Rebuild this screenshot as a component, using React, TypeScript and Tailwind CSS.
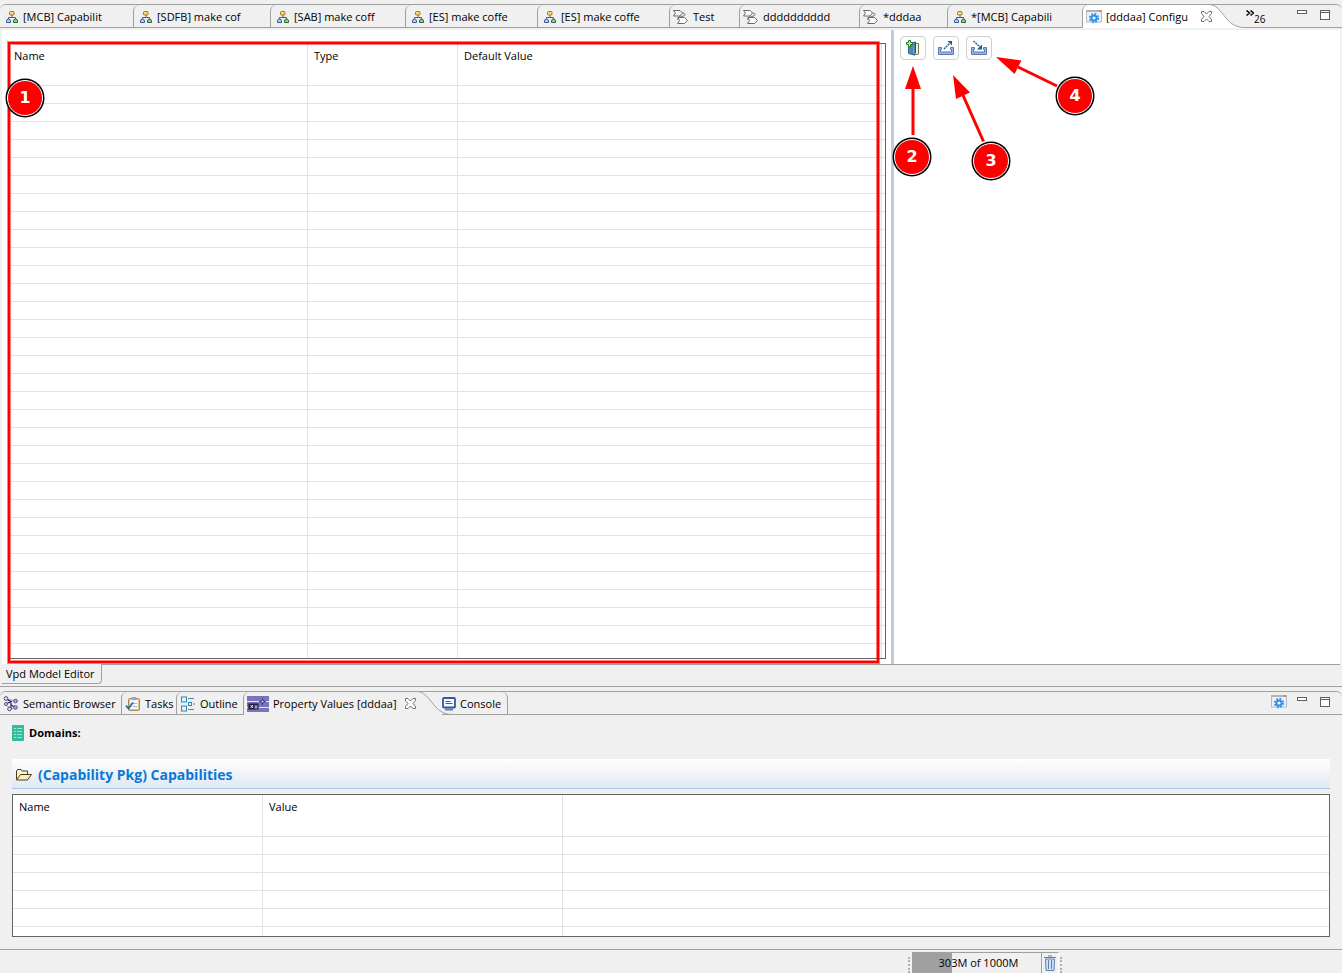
import React from "react";

type IconProps = { className?: string };

const DiagramIcon = () => (
  <svg width="12" height="12" viewBox="0 0 12 12" className="shrink-0" aria-hidden="true">
    <path d="M6 4v2.500M2.500 8V6.500h7V8" fill="none" stroke="#5b5b5b" />
    <rect x="3.500" y="0.500" width="4.500" height="3.500" rx="1" fill="#f7d98a" stroke="#a8741a" />
    <path d="M0.500 11.500v-1.500a2 2 0 0 1 4 0v1.500z" fill="#b8cdf0" stroke="#3a5a9c" />
    <path d="M7.500 11.500v-1.500a2 2 0 0 1 4 0v1.500z" fill="#8fcf8f" stroke="#23702f" />
  </svg>
);

const ChevronsIcon = () => (
  <svg width="16" height="16" viewBox="0 0 16 16" className="shrink-0" aria-hidden="true">
    <g fill="#fafafa" stroke="#6b6b6b">
      <path d="M9.500 4c3.500 0 3.500 3-1 3.500-3 0.500-4.500 1-3.500 3.500" fill="none" />
      <path d="M0.500 1.500h6.500l2.500 2.500-2.500 3H0.500l2-3z" />
      <path d="M5 8.500h6.500l3 3-3 3H4.500l2-3z" />
    </g>
  </svg>
);

const GearWindowIcon = () => (
  <svg width="16" height="14" viewBox="0 0 16 14" className="shrink-0" aria-hidden="true">
    <rect x="0.500" y="0.500" width="15" height="11.500" fill="#eaf1f8" stroke="#b4bcc6" />
    <path d="M0 1h16" stroke="#b9aeb0" strokeWidth="2" />
    <path d="M13 1h2" stroke="#e0754a" strokeWidth="1.500" />
    <circle cx="8" cy="8" r="4.200" fill="none" stroke="#3c9cf0" strokeWidth="2" strokeDasharray="1.800 1.500" />
    <circle cx="8" cy="8" r="2.600" fill="#ffffff" stroke="#2c8fee" strokeWidth="2" />
  </svg>
);

const CloseIcon = ({ className }: IconProps) => (
  <svg width="11" height="11" viewBox="0 0 11 11" className={className} aria-hidden="true">
    <path
      d="M0.500 0.500h2.500L5.500 3 8 0.500h2.500v2L8 5.500l2.500 3v2H8L5.500 8 3 10.500H0.500v-2L3 5.500l-2.500-3z"
      fill="#ffffff"
      stroke="#6e6e6e"
    />
  </svg>
);

const MinimizeIcon = () => (
  <svg width="10" height="10" viewBox="0 0 10 10" aria-hidden="true">
    <rect x="0.500" y="0.500" width="9" height="3" fill="#fff" stroke="#5f5f5f" />
  </svg>
);

const MaximizeIcon = () => (
  <svg width="10" height="10" viewBox="0 0 10 10" aria-hidden="true">
    <rect x="0.500" y="0.500" width="9" height="9" fill="#fff" stroke="#5f5f5f" />
    <path d="M0 2.500h10" stroke="#5f5f5f" />
  </svg>
);

const AddBookIcon = () => (
  <svg width="16" height="16" viewBox="0 0 16 16" aria-hidden="true">
    <path d="M9 3.500h4.500v10.500l-5 1z" fill="#f5f0d8" stroke="#7a7458" />
    <path d="M3.500 5l1-1.500 6-1.500v10l-1 3-6-1.500z" fill="#4a8ab0" stroke="#3a6c8a" />
    <path d="M10.500 2v10.500" stroke="#27506c" />
    <path d="M8.500 6.500v7" stroke="#6aa6c8" />
    <path d="M3.500 0.500h2v2h2v2h-2v2h-2v-2h-2v-2h2z" fill="#d9f0a0" stroke="#1f7a2c" />
  </svg>
);

const Tray = () => (
  <path
    d="M0.500 7.500h3v2h-1v2.500h11v-2.500h-1v-2h3v7h-15z"
    fill="#9db4dc"
    stroke="#5a78b4"
  />
);

const ExportIcon = () => (
  <svg width="16" height="16" viewBox="0 0 16 16" aria-hidden="true">
    <Tray />
    <path d="M6 9l6-6" stroke="#2b5a86" strokeDasharray="2 0.700" strokeWidth="1.400" />
    <path d="M9.500 1H14v4.500z" fill="#1d5c8c" />
  </svg>
);

const ImportIcon = () => (
  <svg width="16" height="16" viewBox="0 0 16 16" aria-hidden="true">
    <Tray />
    <path d="M2.500 1l6.500 6" stroke="#2b5a86" strokeDasharray="2 0.700" strokeWidth="1.400" />
    <path d="M11 4.500v5H6z" fill="#1d5c8c" />
  </svg>
);

const SemanticIcon = () => (
  <svg width="16" height="16" viewBox="0 0 16 16" className="shrink-0" aria-hidden="true">
    <path d="M3 3l10 2M3 9l5 4 5-2" fill="none" stroke="#9a94c0" />
    <path d="M3 3l5 2.500-4 2M8 12V6.500M8 9l4 2" fill="none" stroke="#2c2860" strokeWidth="1.300" />
    <circle cx="3" cy="2.500" r="1.800" fill="#eceafa" stroke="#4a4580" />
    <circle cx="3" cy="8" r="1.500" fill="#eceafa" stroke="#4a4580" />
    <circle cx="12.500" cy="5" r="1.800" fill="#b6b0dc" stroke="#4a4580" />
    <circle cx="6.500" cy="13" r="1.800" fill="#eceafa" stroke="#4a4580" />
    <circle cx="12.500" cy="11.500" r="1.800" fill="#b6b0dc" stroke="#4a4580" />
  </svg>
);

const TasksIcon = () => (
  <svg width="16" height="16" viewBox="0 0 16 16" className="shrink-0" aria-hidden="true">
    <rect x="3.500" y="2.500" width="11" height="12" rx="1" fill="#dcc193" stroke="#b08c55" />
    <rect x="5" y="4" width="8" height="9" fill="#f4f6fa" />
    <rect x="6.500" y="1" width="5" height="3" rx="1" fill="#9aa4b4" />
    <path d="M8 7.500h4M8 10.500h4" stroke="#a8b4cc" />
    <path d="M1 9.500l2.500 3L8 6.500" fill="none" stroke="#1e6fb4" strokeWidth="1.800" />
  </svg>
);

const OutlineIcon = () => (
  <svg width="14" height="16" viewBox="0 0 14 16" className="shrink-0" aria-hidden="true">
    <rect x="0.500" y="1" width="5" height="5" fill="#e6f4fc" stroke="#2b86bd" />
    <rect x="0.500" y="10" width="5" height="5" fill="#e6f4fc" stroke="#2b86bd" />
    <rect x="7.500" y="6.500" width="3" height="3" fill="#e6f4fc" stroke="#2b86bd" />
    <path d="M7 2.500h6M12 8h2M7 13.500h6" stroke="#5a88a8" />
  </svg>
);

const PropertyIcon = () => (
  <svg width="22" height="16" viewBox="0 0 22 16" className="shrink-0" aria-hidden="true">
    <rect width="22" height="16" fill="#7a74bd" />
    <path d="M0 5.500h22M0 11.500h22" stroke="#e6e4f4" />
    <rect x="1.500" y="7.500" width="10" height="6" rx="1" fill="#1f1c40" stroke="#4a4680" />
    <path d="M3.500 9l2.500 3M6 9l-2.500 3M7.500 10h3M7.500 11.800h3" stroke="#fff" strokeWidth="0.900" />
    <path d="M15.500 2l1 2.500 3 1-3 1-1 3-1-3-3-1 3-1z" fill="#3a3468" />
    <circle cx="15.500" cy="5.500" r="1" fill="#dedaf4" />
  </svg>
);

const ConsoleIcon = () => (
  <svg width="14" height="14" viewBox="0 0 14 14" className="shrink-0" aria-hidden="true">
    <rect x="1" y="1" width="12" height="9.500" rx="1" fill="#f4f8fe" stroke="#2c5ba0" strokeWidth="1.800" />
    <path d="M3.500 4.500h5M3.500 6.500h7" stroke="#3f5f98" />
    <path d="M3 12.500h8" stroke="#5f7fb4" strokeWidth="2" />
  </svg>
);

const DomainsIcon = () => (
  <svg width="12" height="16" viewBox="0 0 12 16" className="shrink-0" aria-hidden="true">
    <rect width="12" height="16" rx="1" fill="#31bd9b" />
    <path d="M2 3.500h2M2 6.500h2M2 9.500h2M2 12.500h2M5 3.500h5M5 6.500h5M5 9.500h5M5 12.500h5" stroke="#a4e4d2" />
  </svg>
);

const FolderIcon = () => (
  <svg width="16" height="12" viewBox="0 0 16 12" className="shrink-0" aria-hidden="true">
    <path d="M0.500 10.500V2l1-1.500h3.500l1 1.500h5.500v3" fill="#fdf3cf" stroke="#4c3c1c" />
    <path d="M0.500 11l4-5.500h11L11.500 11z" fill="#fbedc0" stroke="#4c3c1c" />
  </svg>
);

const TrashIcon = () => (
  <svg width="12" height="16" viewBox="0 0 12 16" aria-hidden="true">
    <path d="M0 2.500h12M4 1h4" stroke="#5f82b4" />
    <path d="M1.500 4l0.500 11.500h8L10.500 4z" fill="#cfe0f2" stroke="#5f82b4" />
    <path d="M4.500 5v9M7.500 5v9" stroke="#5f82b4" />
  </svg>
);

const Curve = ({ fill }: { fill: string }) => (
  <svg width="36" height="24" viewBox="0 0 36 24" className="-mt-px shrink-0" aria-hidden="true">
    <path d="M0 0.500C6 0.500 9 3 14 9S24 23.500 36 23.500L36 24H0z" fill={fill} />
    <path d="M0 0.500C6 0.500 9 3 14 9S24 23.500 36 23.500" fill="none" stroke="#a0a0a0" />
  </svg>
);

const editorTabs: { label: string; icon: "diagram" | "chevrons"; width: string }[] = [
  { label: "[MCB] Capabilit", icon: "diagram", width: "w-[133px] pl-1.5" },
  { label: "[SDFB] make cof", icon: "diagram", width: "w-[137px] pl-1.5" },
  { label: "[SAB] make coff", icon: "diagram", width: "w-[135px] pl-1.5" },
  { label: "[ES] make coffe", icon: "diagram", width: "w-[132px] pl-1.5" },
  { label: "[ES] make coffe", icon: "diagram", width: "w-[132px] pl-1.5" },
  { label: "Test", icon: "chevrons", width: "w-[70px] pl-[3px]" },
  { label: "dddddddddd", icon: "chevrons", width: "w-[120px] pl-[3px]" },
  { label: "*dddaa", icon: "chevrons", width: "w-[88px] pl-[3px]" },
  { label: "*[MCB] Capabili", icon: "diagram", width: "w-[135px] pl-1.5" },
];

const Badge = ({ n, place }: { n: number; place: string }) => (
  <div
    className={`absolute flex size-9 items-center justify-center rounded-full border border-white bg-[#fe0000] font-['DejaVu_Sans',sans-serif] text-base font-bold text-white ring-[1.5px] ring-black ${place}`}
  >
    {n}
  </div>
);

const head = "border-b border-[#e2e2e2] text-left align-top font-normal";
const cell = "h-[18px] border-b border-[#e2e2e2] p-0";
const divider = "border-r";

function EditorTable() {
  return (
    <div className="relative h-[616px] border border-[#646464]">
      <div className="h-full overflow-hidden">
        <table className="w-full table-fixed border-separate border-spacing-0">
          <thead>
            <tr className="h-[42px]">
              <th className={`${head} ${divider} w-[298px] px-1 pt-1`}>Name</th>
              <th className={`${head} ${divider} w-[150px] px-1.5 pt-1`}>Type</th>
              <th className={`${head} ${divider} px-1.5 pt-1`}>Default Value</th>
              <th className={`${head} w-[3px] p-0`} />
            </tr>
          </thead>
          <tbody>
            {Array.from({ length: 32 }, (_, i) => (
              <tr key={i}>
                <td className={`${cell} ${divider}`} />
                <td className={`${cell} ${divider}`} />
                <td className={`${cell} ${divider}`} />
                <td className={cell} />
              </tr>
            ))}
          </tbody>
        </table>
      </div>
      <div className="pointer-events-none absolute -top-[3px] right-[5px] -bottom-[6px] -left-[3px] border-4 border-[#fe0000]/50" />
      <div className="pointer-events-none absolute -top-[2px] right-[6px] -bottom-[5px] -left-[2px] border-2 border-[#fe0000]" />
      <Badge n={1} place="-left-[3px] top-9" />
    </div>
  );
}

const toolButton =
  "flex h-6 w-[26px] items-center justify-center rounded-[4px] border border-[#d0d0d0] bg-[#fdfdfd]";

function ToolPane() {
  return (
    <div className="relative pt-1.5 pl-1.5">
      <div className="flex gap-[7px]">
        <button type="button" aria-label="Add property" className={toolButton}>
          <AddBookIcon />
        </button>
        <button type="button" aria-label="Export" className={toolButton}>
          <ExportIcon />
        </button>
        <button type="button" aria-label="Import" className={toolButton}>
          <ImportIcon />
        </button>
      </div>
      <svg
        width="200"
        height="150"
        viewBox="0 0 200 150"
        className="pointer-events-none absolute top-0 left-0"
        aria-hidden="true"
      >
        <g stroke="#fe0000" strokeWidth="3" fill="#fe0000">
          <path d="M19 105V58" />
          <path d="M89.500 111.500L68 63" />
          <path d="M163 56L124 37" />
        </g>
        <g fill="#fe0000">
          <path d="M19 36l8 23H11z" />
          <path d="M59 45l17 17.500-14 6.500z" />
          <path d="M102 27l25.500 3.500-7 13.500z" />
        </g>
      </svg>
      <Badge n={2} place="left-0 top-[109px]" />
      <Badge n={3} place="left-[79px] top-[113px]" />
      <Badge n={4} place="left-[163px] top-[48px]" />
    </div>
  );
}

const bottomTab =
  "flex items-center border-b border-l border-[#a0a0a0] rounded-tl-[6px] pt-px whitespace-nowrap";

export default function App() {
  return (
    <div className="flex min-h-screen flex-col overflow-hidden bg-[#f0f0f0] pt-1 font-['Open_Sans','Noto_Sans',sans-serif] text-[11px] leading-4 text-black">
      <nav className="flex h-6 rounded-t-[6px] border-t border-[#a0a0a0]">
        {editorTabs.map((t, i) => (
          <button
            type="button"
            key={i}
            className={`flex shrink-0 items-center overflow-hidden border-b border-[#a0a0a0] pt-px whitespace-nowrap ${t.width} ${
              i === 0 ? "gap-[5px]" : t.icon === "diagram" ? "gap-[5px] rounded-tl-[6px] border-l" : "gap-1 rounded-tl-[6px] border-l"
            }`}
          >
            {t.icon === "diagram" ? <DiagramIcon /> : <ChevronsIcon />}
            {t.label}
          </button>
        ))}
        <button
          type="button"
          className="flex w-[126px] shrink-0 items-center gap-1 rounded-tl-[6px] border-l border-[#a0a0a0] bg-white pl-[3px] whitespace-nowrap"
        >
          <GearWindowIcon />
          [dddaa] Configu
          <CloseIcon className="relative -mr-1 ml-auto" />
        </button>
        <Curve fill="#ffffff" />
        <div className="flex flex-1 items-start rounded-tr-[6px] border-b border-[#a0a0a0] pr-3">
          <button type="button" className="ml-0.5 flex" aria-label="Show 26 more tabs">
            <svg width="8" height="7" viewBox="0 0 8 7" className="mt-[5px]" aria-hidden="true">
              <path d="M0.500 0.500l3 2.500-3 2.500M4.500 0.500l3 2.500-3 2.500" fill="none" stroke="#000" strokeWidth="1.500" />
            </svg>
            <span className="mt-1.5 text-[10px]">26</span>
          </button>
          <button type="button" aria-label="Minimize" className="mt-[5px] ml-auto">
            <MinimizeIcon />
          </button>
          <button type="button" aria-label="Maximize" className="mt-[5px] ml-[13px]">
            <MaximizeIcon />
          </button>
        </div>
      </nav>

      <main className="mx-0.5 mt-0.5 grid grid-cols-[889fr_3px_446fr] border-b border-[#a0a0a0] bg-white">
        <div className="pt-[13px] pr-[5px] pb-[5px] pl-[7px]">
          <EditorTable />
        </div>
        <div className="bg-[#c0ccda]" />
        <ToolPane />
      </main>

      <div className="flex h-[22px] items-start border-b border-[#a0a0a0] pl-0.5">
        <button
          type="button"
          className="-mt-px h-5 rounded-br-[4px] border-r border-b border-[#a0a0a0] bg-[#f0f0f0] pr-1.5 pl-1"
        >
          Vpd Model Editor
        </button>
      </div>

      <nav className="mt-1 flex h-6 rounded-t-[6px] border-t border-[#a0a0a0]">
        <button
          type="button"
          className="flex w-[121px] items-center gap-1 border-b border-[#a0a0a0] pt-px pl-[3px] whitespace-nowrap"
        >
          <SemanticIcon />
          Semantic Browser
        </button>
        <button type="button" className={`${bottomTab} w-[55px] gap-1 pl-[3px]`}>
          <TasksIcon />
          Tasks
        </button>
        <button type="button" className={`${bottomTab} w-[67px] gap-[5px] pl-1`}>
          <OutlineIcon />
          Outline
        </button>
        <button
          type="button"
          className="flex w-[173px] items-center gap-1 rounded-tl-[6px] border-l border-[#a0a0a0] pl-[3px] whitespace-nowrap"
        >
          <PropertyIcon />
          Property Values [dddaa]
          <CloseIcon className="ml-auto" />
        </button>
        <Curve fill="#f0f0f0" />
        <button
          type="button"
          className="-ml-[10px] flex w-[66px] items-center gap-1 rounded-tr-[6px] border-r border-[#a0a0a0] pt-px whitespace-nowrap shadow-[inset_0_-1px_0_#a0a0a0]"
        >
          <ConsoleIcon />
          Console
        </button>
        <div className="flex flex-1 items-start justify-end rounded-tr-[6px] border-b border-[#a0a0a0] pr-3">
          <button type="button" aria-label="Configure" className="mt-[3px]">
            <GearWindowIcon />
          </button>
          <button type="button" aria-label="Minimize" className="mt-[5px] ml-2.5">
            <MinimizeIcon />
          </button>
          <button type="button" aria-label="Maximize" className="mt-[5px] ml-[13px]">
            <MaximizeIcon />
          </button>
        </div>
      </nav>

      <section className="px-3 pt-2.5 pb-3">
        <div className="flex items-center gap-[5px] font-bold">
          <DomainsIcon />
          Domains:
        </div>
        <h2 className="mt-[18px] flex h-[30px] items-center gap-1.5 border-b border-[#a9c7e4] bg-linear-to-b from-white to-[#e1e8f2] pt-0.5 pl-1 text-sm font-bold text-[#0a78d7]">
          <FolderIcon />
          (Capability Pkg) Capabilities
        </h2>
        <div className="mt-[5px] h-[143px] overflow-hidden border border-[#646464] bg-white">
          <table className="w-full table-fixed border-separate border-spacing-0">
            <thead>
              <tr className="h-[42px]">
                <th className={`${head} ${divider} w-[250px] px-1.5 pt-1`}>Name</th>
                <th className={`${head} ${divider} w-[300px] px-1.5 pt-1`}>Value</th>
                <th className={`${head} p-0`} />
              </tr>
            </thead>
            <tbody>
              {Array.from({ length: 6 }, (_, i) => (
                <tr key={i}>
                  <td className={`${cell} ${divider}`} />
                  <td className={`${cell} ${divider}`} />
                  <td className={cell} />
                </tr>
              ))}
            </tbody>
          </table>
        </div>
      </section>

      <footer className="flex h-6 items-end justify-end border-t border-[#a0a0a0] pr-[280px]">
        <div className="h-4 w-0.5 border-l-2 border-dotted border-[#b4b0a8]" />
        <div className="relative ml-0.5 h-[21px] w-[130px] border-t border-r border-[#a0a0a0]">
          <div className="h-full w-10 bg-[#a0a0a0]" />
          <span className="absolute inset-0 flex items-center justify-center pl-1">303M of 1000M</span>
        </div>
        <button
          type="button"
          aria-label="Run garbage collector"
          className="flex h-[21px] w-[17px] items-center justify-center border-t border-r border-t-[#a0a0a0] border-r-white"
        >
          <TrashIcon />
        </button>
        <div className="ml-px h-4 w-0.5 border-l-2 border-dotted border-[#b4b0a8]" />
      </footer>
    </div>
  );
}
